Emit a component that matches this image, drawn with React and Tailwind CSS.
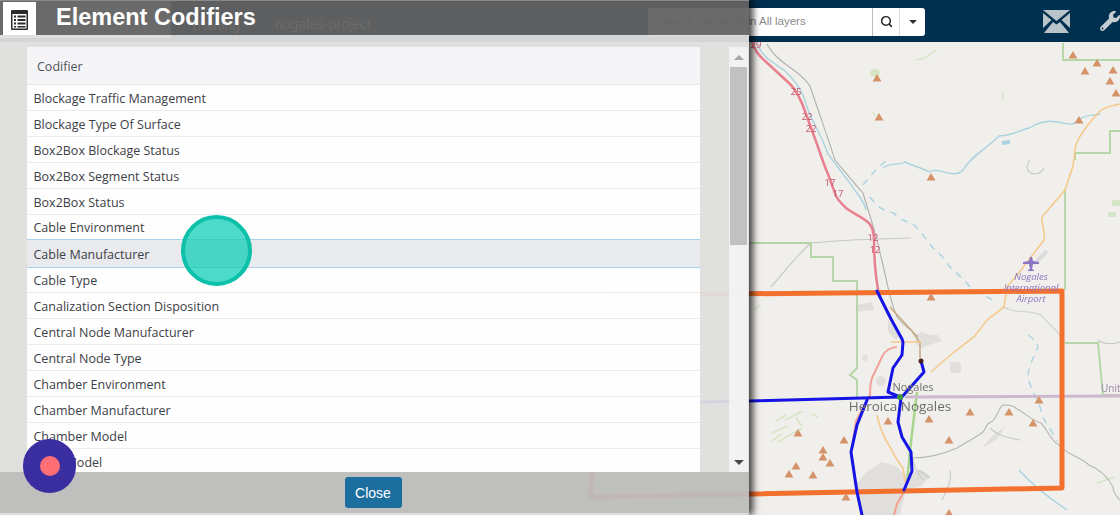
import React from "react";
import { FaWrench } from "react-icons/fa";
import { Search } from "lucide-react";

const peaks = [[1073,55],[1097,63],[1085,71],[1113,70],[1110,81],[1116,93],[1079,120],[877,78],[879,117],[931,177],[931,297],[1039,400],[1033,423],[1009,412],[970,412],[929,419],[888,421],[949,440],[844,440],[823,450],[823,457],[830,463],[798,433],[796,466],[789,474],[813,475],[846,497],[949,513]];

const plain = "bg-white/95 border-b border-[#ececec]";
const rows = [
  ["Blockage Traffic Management", `h-[26px] ${plain}`],
  ["Blockage Type Of Surface", `h-[26px] ${plain}`],
  ["Box2Box Blockage Status", `h-[26px] ${plain}`],
  ["Box2Box Segment Status", `h-[26px] ${plain}`],
  ["Box2Box Status", `h-[26px] ${plain}`],
  ["Cable Environment", "h-[24px] bg-white/95"],
  ["Cable Manufacturer", "h-[29px] bg-[#e9eaee] border-y border-[#a9d3ea]"],
  ["Cable Type", `h-[25px] ${plain}`],
  ["Canalization Section Disposition", `h-[26px] ${plain}`],
  ["Central Node Manufacturer", `h-[26px] ${plain}`],
  ["Central Node Type", `h-[26px] ${plain}`],
  ["Chamber Environment", `h-[26px] ${plain}`],
  ["Chamber Manufacturer", `h-[26px] ${plain}`],
  ["Chamber Model", `h-[26px] ${plain}`],
  ["Coax Model", `h-[26px] ${plain}`],
];

function MapArt() {
  return (
    <svg className="absolute left-0 top-0 w-[1120px] h-[515px] blur-[0.4px]" viewBox="0 0 1120 515">
      <rect width="1120" height="515" fill="#f1efeb" />
      <g fill="#e1dfdc">
        <path d="M866 472l16-10 14 4 8 8 18-4 8 6-8 10-16 4-6 25h-40l-4-30z" />
        <path d="M916 335l6-3 8 3 8 0 4 6-10 3-10 4-6-4z" />
        <path d="M888 320l6 6 6 10-4 4-8-8z" />
        <rect x="950" y="362" width="11" height="11" rx="2" />
        <circle cx="881" cy="381" r="5" />
        <circle cx="865" cy="358" r="3" />
        <path d="M856 305l16-3 2 8-18 2z" />
        <path d="M996 440l-14 8 12-14 12-8z" />
      </g>
      <g fill="none" stroke="#d5e6c6" strokeWidth="1.6">
        <path d="M936 50c-6 4-8 8-20 10M873 112l2 4M1003 92v8M772 441l10-7M786 415l-10 6M1097 483l18-6M760 305l-6 5" />
        <path d="M785 420l18-9M772 433l16-7M778 442l24-14M812 414l6 3M796 418l6 8" />
      </g>
      <g fill="#d5e6c6">
        <ellipse cx="875" cy="73" rx="5" ry="4" />
        <rect x="1112" y="200" width="8" height="6" />
        <rect x="1108" y="212" width="8" height="5" />
      </g>
      <g fill="none" stroke="#a9d3df" strokeWidth="1.4">
        <path d="M758 46c6 12 14 16 26 24 8 8 18 18 22 34 4 14 16 32 22 50 6 8 18 24 24 32 6 10 12 14 14 24" />
        <path d="M883 168c6-6 16-2 22-6 8 4 18 6 24 10 10-6 24 8 34-2 8-14 22-20 36-34 12 0 22-6 30-8 10-6 20-8 28-6 8 0 14 6 22-2 6-6 14-4 21-6" />
        <path d="M1002 143l8-1" strokeWidth="4" />
        <path d="M1067 510c-18-12-34-24-48-40" />
      </g>
      <g fill="none" stroke="#a9d3df" strokeWidth="1.4" strokeDasharray="7 6">
        <path d="M863 185c8-10 16-20 25-25" />
        <path d="M870 197c6 8 12 14 24 16 6 8 14 8 20 12 8 8 12 14 19 23 8 6 12 12 17 19 6 6 14 12 20 20 8 6 18 10 27 16" />
        <path d="M1028 335c6 4 12 10 9 14-4 10-10 20-9 30 4 12 12 24 15 38 4 8 10 16 14 24" />
      </g>
      <g fill="none" stroke="#b0b0b0" strokeWidth="1.1">
        <path d="M767 44c4 8 14 18 24 24 8 6 14 10 19 18 8 24 18 52 25 74 10 12 18 22 28 33 6 20 14 44 18 64 4 14 8 42 16 60 8 10 16 14 21 20" />
        <path d="M811 243c20-2 60-4 100-5M811 243c-14 12-26 28-40 44" stroke="#c6c6c6" />
        <path d="M913 458c14 0 30-4 44-10 10-6 18-10 26-16 4-4 2-8 8-10 6-2 8-16 12-17 6 0 10 0 14 4 8 4 16 12 24 14 6 6 10 18 18 22 8 10 22 12 30 20 10 4 18 10 24 22 0 6 4 10 7 13" stroke="#b5b5b5" />
        <path d="M918 470l12 8M913 458c0 8 4 14 10 22M990 428c8 8 20 10 30 12M950 470c2 10-2 18-8 30" stroke="#c9c9c9" />
        <path d="M1030 160c-10 12 8 20 14 8M1120 342c-10 4-20 0-22-2" stroke="#c6c6c6" />
        <path d="M1003 307c16 8 24 2 38 8 8 10 20 18 24 28" stroke="#d0d0d0" />
      </g>
      <g fill="none" stroke="#b5d6a7" strokeWidth="2">
        <path d="M750 243h61v14h22v24h24v87l-7 7 7 5v18" />
        <path d="M1063 43v17h57M1120 131h-10v22h-35v7M1065 190v100M1065 343h33l5 52h17" />
      </g>
      <path d="M917 392l-6 50-4 40" fill="none" stroke="#a6d68b" strokeWidth="2.5" />
      <path d="M905 397l215-1" fill="none" stroke="#cdb8cf" strokeWidth="3" />
      <g fill="none" stroke="#f5c98c" strokeWidth="1.6">
        <path d="M1120 104c-8 2-14 2-20 7-6 6-9 10-13 15-5 8-10 12-12 23 0 4-1 8-2 17l-8 24-23 27c-1 8 4 14 2 23l-23 30-14 17-3 20-17 13-13 17-20 15-23 20" />
        <path d="M877 415c2 10 6 20 10 27 4 6 10 20 16 26l2 14" />
        <path d="M890 307l22 24 8 12v15" stroke="#c9ad85" />
        <path d="M903 342h-12M905 342h16" />
      </g>
      <path d="M752 42c2 6 5 12 12 18l26 24c6 6 12 18 16 30l8 22c4 10 10 30 14 38l8 22c3 6 6 8 10 12 8 6 14 8 19 12 7 4 8 10 9 18 0 20 2 42 5 56" fill="none" stroke="#e8808f" strokeWidth="2.5" />
      <path d="M897 347c-6 0-12 4-14 8l-11 23c-2 6-2 14-2 17l-14 26-5 32 6 40 5 22" fill="none" stroke="#f2a29a" strokeWidth="2" />
      <path d="M905 490l-8 14-3 11" fill="none" stroke="#f0a08c" strokeWidth="2" />
      <path d="M610 295L1062 291V488L590 497Z" fill="none" stroke="#f3702e" strokeWidth="5" strokeLinejoin="round" />
      <g fill="none" stroke="#1414e6" strokeWidth="3" strokeLinejoin="round" strokeLinecap="round">
        <path d="M877 291l14 28 11 20 1 3-1 13-9 13-5 24 12 5" />
        <path d="M700 402l50-1 150-4" />
        <path d="M921 361l3 11-23 26-3 24 4 15 9 15 1 19-8 19" />
        <path d="M867 400l-10 25-6 27 6 40 5 23" />
      </g>
      <circle cx="900" cy="397" r="3" fill="#3f9a3f" />
      <circle cx="921" cy="361" r="2.5" fill="#4a1f1f" />
      <g fill="#d5936a">
        {peaks.map(([x, y]) => (
          <path key={`${x}-${y}`} d={`M${x} ${y - 4}l4.5 7.5h-9z`} />
        ))}
      </g>
      <g fill="#c5566c" fontSize="9.500" fontFamily="'Open Sans', sans-serif" textAnchor="middle">
        <text x="756" y="48">29</text>
        <text x="796" y="95">25</text>
        <text x="807" y="120">22</text>
        <text x="811" y="132">22</text>
        <text x="830" y="186">17</text>
        <text x="838" y="197">17</text>
        <text x="873" y="241">12</text>
        <text x="875" y="253">12</text>
      </g>
      <g fill="#8a76c4" fontSize="9.500" fontStyle="italic" fontFamily="'Open Sans', sans-serif" textAnchor="middle">
        <text x="1031" y="280">Nogales</text>
        <text x="1031" y="291">International</text>
        <text x="1031" y="302">Airport</text>
      </g>
      <path d="M1047 251l-13 13" stroke="#dcdce0" strokeWidth="4" />
      <path d="M1032 257l1 4 6 1v2l-6 0-1 5 2 1v1h-6v-1l2-1-1-5-6 0v-2l6-1 1-4z" fill="#8a76c4" />
      <g fontFamily="'Open Sans', sans-serif" fill="#6d6d6d" textAnchor="middle">
        <text x="913" y="391" fontSize="11">Nogales</text>
        <text x="900" y="411" fontSize="13.5">Heroica Nogales</text>
      </g>
      <text x="1101" y="392" fontFamily="'Open Sans', sans-serif" fontSize="10" fill="#9d86a8">Unit</text>
    </svg>
  );
}

function Envelope() {
  return (
    <svg width="27" height="23" viewBox="0 0 27 23" fill="#b9c3ca">
      <path d="M0 0h27L13.500 11z" />
      <path d="M0 3v15l8.500-8zM27 3v15l-8.500-8z" />
      <path d="M1 23l9-11 3.500 2.500L17 12l9 11z" />
    </svg>
  );
}

function ListIcon() {
  return (
    <svg width="17" height="20" viewBox="0 0 17 20">
      <rect width="17" height="20" rx="1" fill="#2b2b2b" />
      <rect x="1.500" y="4" width="14" height="14.500" fill="#fff" />
      <g fill="#2b2b2b">
        <rect x="3" y="5.500" width="2" height="2" />
        <rect x="6.500" y="5.500" width="8" height="2" />
        <rect x="3" y="9" width="2" height="2" />
        <rect x="6.500" y="9" width="8" height="2" />
        <rect x="3" y="12.500" width="2" height="2" />
        <rect x="6.500" y="12.500" width="8" height="2" />
        <rect x="3" y="16" width="2" height="1.500" />
        <rect x="6.500" y="16" width="8" height="1.500" />
      </g>
    </svg>
  );
}

export default function App() {
  return (
    <div className="relative w-[1120px] h-[515px] overflow-hidden bg-[#f1efeb] font-['Open_Sans',sans-serif]">
      <MapArt />

      <header className="relative flex h-[42px] items-center bg-[#00304f] overflow-hidden">
        <div className="h-[38px] w-[171px] shrink-0 self-start bg-white" />
        <span className="ml-[19px] mt-[8px] w-[85px] shrink-0 font-['Liberation_Sans',sans-serif] text-sm text-white">Training</span>
        <span className="mt-[6px] w-[373px] shrink-0 font-['Liberation_Sans',sans-serif] text-sm text-white">nogales-project</span>
        <div className="mt-[1px] flex h-[28px] w-[277px] shrink-0 rounded-[3px] bg-white">
          <span className="flex w-[225px] items-center border-r border-[#bbb] pl-[10px] font-['Liberation_Sans',sans-serif] text-[11.5px] text-[#8a8a8a]">Search elements in All layers</span>
          <span className="flex w-[27px] items-center justify-center border-r border-[#ddd] text-[#222]"><Search size={13} strokeWidth={2.75} /></span>
          <span className="flex flex-1 items-center justify-center"><span className="h-0 w-0 border-x-[4px] border-t-[4px] border-x-transparent border-t-[#333]" /></span>
        </div>
        <div className="ml-[118px] shrink-0"><Envelope /></div>
        <FaWrench size={20} color="#c4ccd2" className="ml-[30px] shrink-0" />
      </header>

      <section className="absolute left-0 top-0 flex h-[515px] w-[749px] flex-col shadow-[4px_0_7px_rgba(0,0,0,0.75)]">
        <div className="flex h-[35px] shrink-0 items-start border-t border-[#8a8a8a] bg-[#626262]/95">
          <div className="ml-[3px] mt-[1px] flex h-[35px] w-[33px] items-center justify-center bg-white"><ListIcon /></div>
          <h1 className="ml-[20px] font-['Liberation_Sans',sans-serif] text-[23.5px] font-bold leading-[33px] text-white">Element Codifiers</h1>
        </div>

        <div className="flex min-h-0 flex-1 bg-[#dedede]/95 pl-[27px] pt-[12px]">
          <div className="w-[673px] shrink-0 overflow-hidden text-[12.5px] text-[#3d4046]">
            <div className="flex h-[38px] items-center border-b border-[#e6e6e6] bg-[#f5f6f8]/95 pl-[10px] pt-[3px] font-medium text-[#50535a]">Codifier</div>
            {rows.map(([label, cls]) => (
              <div key={label} className={`flex items-center pl-[6.500px] pt-[3px] ${cls}`}>{label}</div>
            ))}
          </div>
          <div className="ml-[29px] flex w-[19px] shrink-0 flex-col items-center bg-[#f2f2f2]/95">
            <div className="flex h-[20px] w-full items-center justify-center"><span className="h-0 w-0 border-x-[5px] border-b-[5px] border-x-transparent border-b-[#a5a5a5]" /></div>
            <div className="h-[178px] w-[17px] bg-[#c1c1c1]" />
            <div className="mt-auto flex h-[20px] w-full items-center justify-center"><span className="h-0 w-0 border-x-[5px] border-t-[5px] border-x-transparent border-t-[#4a4a4a]" /></div>
          </div>
        </div>

        <footer className="flex h-[43px] shrink-0 justify-center border-b-2 border-[#dcdcdc] bg-[#bcbcbc]/95 pt-[5px] pr-[3px]">
          <button className="h-[31px] w-[57px] rounded-[3px] bg-[#1c6e9f] font-['Liberation_Sans',sans-serif] text-sm text-white">Close</button>
        </footer>
      </section>

      <div className="absolute left-[181px] top-[215px] h-[71px] w-[71px] rounded-full border-[4px] border-[#0cc0a9] bg-[#10cdb8]/75" />
      <div className="absolute left-[23px] top-[439px] flex h-[54px] w-[53px] items-center justify-center rounded-full bg-[#3a2ea0]">
        <div className="h-[20px] w-[20px] rounded-full bg-[#ff6f75]" />
      </div>
    </div>
  );
}
